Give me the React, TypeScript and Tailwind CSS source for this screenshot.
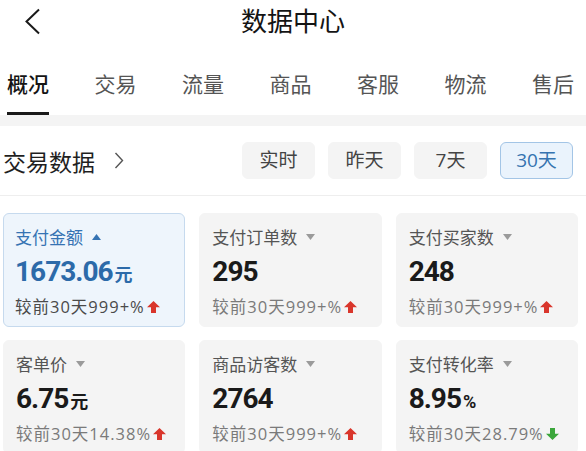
import React from "react";

type Card = {
  label: string;
  value: string;
  unit?: string;
  unitPct?: boolean;
  cmp: string;
  up: boolean;
  active?: boolean;
};

const cards: Card[] = [
  { label: "支付金额", value: "1673.06", unit: "元", cmp: "较前30天999+%", up: true, active: true },
  { label: "支付订单数", value: "295", cmp: "较前30天999+%", up: true },
  { label: "支付买家数", value: "248", cmp: "较前30天999+%", up: true },
  { label: "客单价", value: "6.75", unit: "元", cmp: "较前30天14.38%", up: true },
  { label: "商品访客数", value: "2764", cmp: "较前30天999+%", up: true },
  { label: "支付转化率", value: "8.95", unit: "%", unitPct: true, cmp: "较前30天28.79%", up: false },
];

const tabs = ["概况", "交易", "流量", "商品", "客服", "物流", "售后"];
const ranges = ["实时", "昨天", "7天", "30天"];

function Arrow({ up }: { up: boolean }) {
  return (
    <svg width="13" height="12" viewBox="0 0 13 12" className="ml-[2px] shrink-0">
      {up ? (
        <polygon points="6.5,0 13,6.3 9,6.3 9,12 4,12 4,6.3 0,6.3" fill="#d9362c" />
      ) : (
        <polygon points="6.5,12 13,5.7 9,5.7 9,0 4,0 4,5.7 0,5.7" fill="#3ba63b" />
      )}
    </svg>
  );
}

function MetricCard({ c }: { c: Card }) {
  return (
    <div
      className={
        c.active
          ? "h-[114px] rounded-[6px] border border-[#c6daee] bg-[#eef5fc] pl-[11px] pt-[11px]"
          : "h-[114px] rounded-[6px] border border-[#f4f4f4] bg-[#f4f4f4] pl-[12px] pt-[11px]"
      }
    >
      <div className="flex h-[24px] items-center">
        <span
          className={
            c.active
              ? "text-[17px] leading-[24px] text-[#3573b3]"
              : "text-[17px] leading-[24px] text-[#555555]"
          }
        >
          {c.label}
        </span>
        <svg width="9" height="6" viewBox="0 0 9 6" className="ml-[9px]">
          {c.active ? (
            <polygon points="4.5,0 9,6 0,6" fill="#3573b3" />
          ) : (
            <polygon points="0,0 9,0 4.5,6" fill="#9a9a9a" />
          )}
        </svg>
      </div>
      <div className="mt-[5px] flex h-[36px] items-baseline">
        <span
          className={
            c.active
              ? "font-['Roboto','Noto_Sans_CJK_SC',sans-serif] text-[28px] font-bold leading-[36px] tracking-[-1px] text-[#2c6aa9]"
              : "font-['Roboto','Noto_Sans_CJK_SC',sans-serif] text-[28px] font-bold leading-[36px] tracking-[-1px] text-[#1a1a1a]"
          }
        >
          {c.value}
        </span>
        {c.unit && (
          <span
            className={
              (c.active ? "text-[#2c6aa9] " : "text-[#1a1a1a] ") +
              (c.unitPct
                ? "ml-[2px] font-['Roboto',sans-serif] text-[18px] font-bold"
                : "ml-[2px] text-[18px] font-bold")
            }
          >
            {c.unit}
          </span>
        )}
      </div>
      <div className="mt-[5px] flex h-[24px] items-center">
        <span
          className={
            c.active
              ? "font-['Open_Sans','Noto_Sans_CJK_SC',sans-serif] text-[16.5px] leading-[24px] tracking-[1px] text-[#4a4a4a]"
              : "font-['Open_Sans','Noto_Sans_CJK_SC',sans-serif] text-[16.5px] leading-[24px] tracking-[1px] text-[#7a7a7a]"
          }
        >
          {c.cmp}
        </span>
        <Arrow up={c.up} />
      </div>
    </div>
  );
}

export default function App() {
  return (
    <div className="h-[451px] w-[586px] overflow-hidden bg-white font-['Noto_Sans_CJK_SC','Noto_Sans',sans-serif]">
      {/* header */}
      <div className="grid h-[40px] grid-cols-[1fr_auto_1fr] items-center">
        <div className="pl-[24px] pt-[2px]">
          <svg width="17" height="27" viewBox="0 0 17 27">
            <polyline points="15,1.5 2.5,13.5 15,25.5" fill="none" stroke="#1a1a1a" strokeWidth="2" />
          </svg>
        </div>
        <div className="text-[26px] leading-[34px] text-[#141414]">数据中心</div>
        <div />
      </div>

      {/* tabs */}
      <div className="flex h-[75px] items-start gap-[45.5px] pl-[7px]">
        {tabs.map((t, i) => (
          <div key={t} className="flex shrink-0 flex-col items-stretch pt-[29px]">
            <span
              className={
                i === 0
                  ? "text-[21px] leading-[28px] font-medium text-[#141414]"
                  : "text-[21px] leading-[28px] text-[#555555]"
              }
            >
              {t}
            </span>
            <div className={i === 0 ? "mt-[15px] h-[3px] bg-[#1a1a1a]" : "mt-[15px] h-[3px]"} />
          </div>
        ))}
      </div>

      {/* gray band */}
      <div className="h-[11px] bg-[#f4f4f4]" />

      {/* section header */}
      <div className="flex h-[70px] items-center border-b border-[#eeeeee] pl-[3px] pr-[13px]">
        <span className="text-[23px] leading-[30px] text-[#1f1f1f]">交易数据</span>
        <svg width="10" height="17" viewBox="0 0 10 17" className="ml-[19px]">
          <polyline points="1.5,1 8.5,8.5 1.5,16" fill="none" stroke="#555555" strokeWidth="1.4" />
        </svg>
        <div className="ml-auto flex gap-[13px]">
          {ranges.map((r) => (
            <div
              key={r}
              className={
                r === "30天"
                  ? "flex h-[37px] w-[73px] items-center justify-center rounded-[6px] border border-[#a3c5e6] bg-[#eaf3fc] font-['Open_Sans','Noto_Sans_CJK_SC',sans-serif] text-[19px] text-[#3573b0]"
                  : "flex h-[37px] w-[73px] items-center justify-center rounded-[6px] border border-[#f4f4f4] bg-[#f4f4f4] font-['Open_Sans','Noto_Sans_CJK_SC',sans-serif] text-[19px] text-[#444444]"
              }
            >
              {r}
            </div>
          ))}
        </div>
      </div>

      {/* cards */}
      <div className="grid grid-cols-3 gap-x-[14px] gap-y-[13px] pl-[3px] pr-[8px] pt-[17px]">
        {cards.map((c) => (
          <MetricCard key={c.label} c={c} />
        ))}
      </div>
    </div>
  );
}
